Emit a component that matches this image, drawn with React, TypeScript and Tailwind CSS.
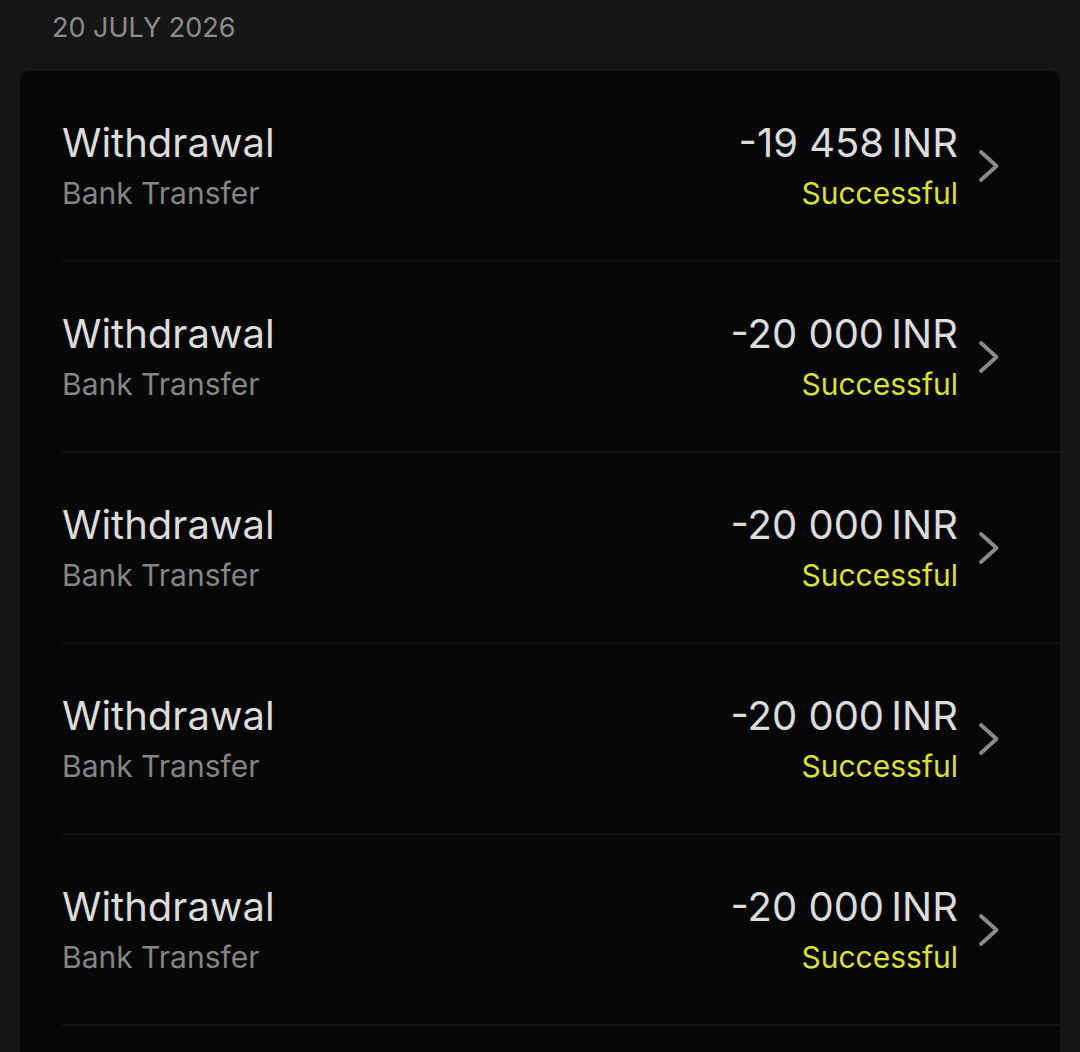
const rows = [
  { amount: "-19 458\u2009INR" },
  { amount: "-20 000\u2009INR" },
  { amount: "-20 000\u2009INR" },
  { amount: "-20 000\u2009INR" },
  { amount: "-20 000\u2009INR" },
];

function Chevron() {
  return (
    <svg width="26" height="34" viewBox="0 0 26 34" fill="none" className="shrink-0">
      <path d="M4 3 L19.5 17 L4 31" stroke="#8a8a8a" strokeWidth="3.8" strokeLinecap="round" strokeLinejoin="round" />
    </svg>
  );
}

function TxRow({ amount }: { amount: string }) {
  return (
    <div className="ml-[42px] flex h-[191px] items-center border-b-2 border-[#121212] pr-[57px]">
      <div className="flex-1">
        <div className="text-[40px] leading-[48px] text-[#dcdcdc]">Withdrawal</div>
        <div className="mt-[6px] text-[30px] leading-[40px] text-[#858585]">Bank Transfer</div>
      </div>
      <div className="flex items-center gap-[19px]">
        <div className="text-right">
          <div className="text-[40px] leading-[48px] text-[#dcdcdc]">{amount}</div>
          <div className="mt-[6px] text-[30px] leading-[40px] text-[#d9e03a]">Successful</div>
        </div>
        <Chevron />
      </div>
    </div>
  );
}

export default function App() {
  return (
    <div className="h-[1052px] overflow-hidden bg-[#161616] font-['Inter',sans-serif] antialiased">
      <div className="pl-[52px] pt-[10px] text-[27px] leading-[36px] text-[#8c8c8c]">20 JULY 2026</div>
      <div className="mx-[20px] mt-[25px] h-[1000px] rounded-[10px] bg-[#070707]">
        {rows.map((r, i) => (
          <TxRow key={i} amount={r.amount} />
        ))}
      </div>
    </div>
  );
}
